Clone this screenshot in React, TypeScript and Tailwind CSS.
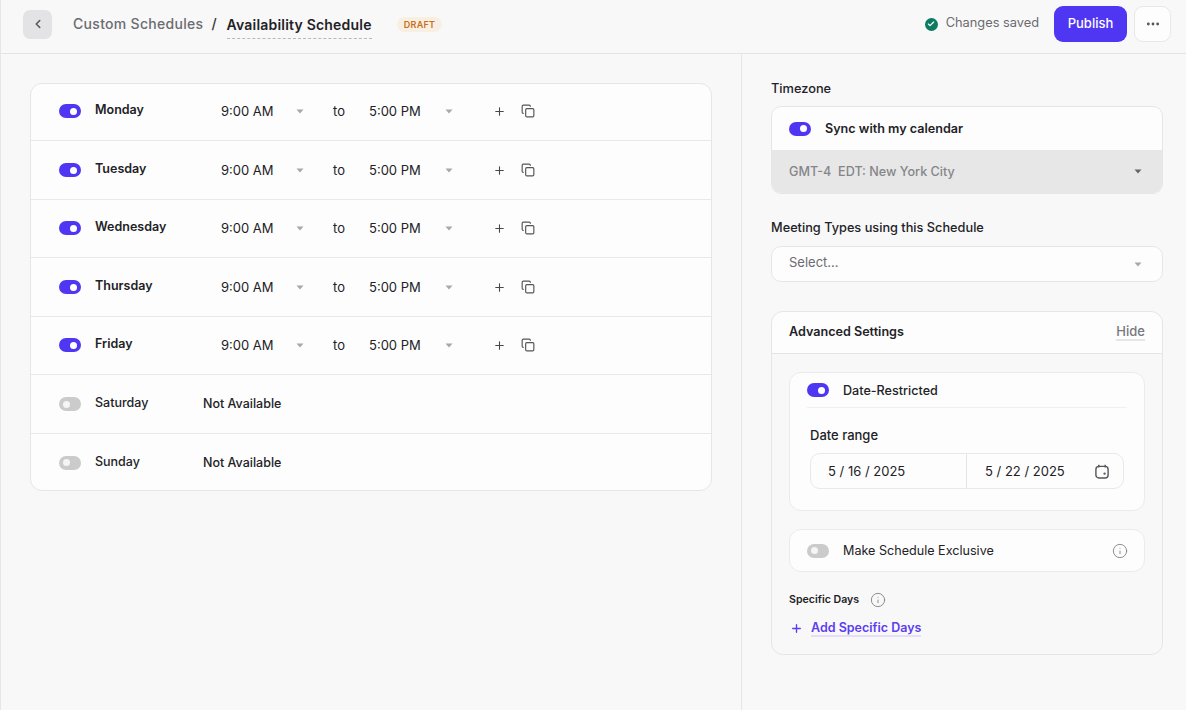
import React from "react";
import { ChevronLeft, Plus, Copy, Ellipsis, Info, Check } from "lucide-react";

function Toggle({ on }: { on: boolean }) {
  return on ? (
    <span className="flex h-[14px] w-[22px] shrink-0 items-center justify-end rounded-full bg-[#4f36f3] pr-[4px]">
      <span className="h-[7px] w-[7px] rounded-full bg-white" />
    </span>
  ) : (
    <span className="flex h-[14px] w-[22px] shrink-0 items-center rounded-full bg-[#cbcbcb] pl-[4px]">
      <span className="h-[7px] w-[7px] rounded-full bg-[#f5f5f5]" />
    </span>
  );
}

function Caret({ color = "#a8a8a8" }: { color?: string }) {
  return (
    <svg width="8" height="5" viewBox="0 0 8 5" className="shrink-0">
      <path d="M0.5 0.5h7L4 4.6z" fill={color} />
    </svg>
  );
}

function Row({ day, on, cls }: { day: string; on: boolean; cls: string }) {
  return (
    <div className={`flex items-center pl-[28px] ${cls}`}>
      <Toggle on={on} />
      <span className={`ml-[14px] w-[108px] -translate-y-[1px] text-[12.5px] leading-4 text-[#222226] ${on ? "font-semibold" : "font-medium"}`}>
        {day}
      </span>
      {on ? (
        <div className="flex items-center text-[13px] leading-4 text-[#222226]">
          <span className="ml-[18px] w-[75px]">9:00 AM</span>
          <Caret />
          <span className="ml-[29px] w-[36px]">to</span>
          <span className="w-[76px]">5:00 PM</span>
          <Caret />
          <Plus size={13} strokeWidth={2} className="ml-[40px] text-[#48484c]" />
          <Copy size={14} strokeWidth={2} className="ml-[15px] text-[#55555a]" />
        </div>
      ) : (
        <span className="text-[12.5px] font-medium leading-4 text-[#222226]">Not Available</span>
      )}
    </div>
  );
}

export default function App() {
  return (
    <div className="flex h-[710px] w-[1186px] flex-col overflow-hidden border-l border-[#e6e6e6] bg-[#f8f8f8] font-['Inter',sans-serif]">
      <header className="flex h-[54px] shrink-0 items-center border-b border-[#e4e4e4] pb-[5px] pl-[22px] pr-[15px]">
        <button className="flex h-[29px] w-[29px] items-center justify-center rounded-[7px] bg-[#e3e3e5]">
          <ChevronLeft size={14} strokeWidth={2.6} className="text-[#55555a]" />
        </button>
        <span className="ml-[21px] text-[14px] font-medium leading-5 tracking-[0.3px] text-[#6b6b70]">Custom Schedules</span>
        <span className="ml-[8px] text-[14px] font-medium leading-5 text-[#333338]">/</span>
        <span className="ml-[10px] border-b border-dashed border-[#b8b8b8] pb-[3px] pt-[6px] text-[14px] font-semibold leading-5 tracking-[0.2px] text-[#222226]">
          Availability Schedule
        </span>
        <span className="ml-[25px] rounded-full bg-[#f8efe3] px-[7px] py-[2px] text-[9px] font-semibold leading-[11px] tracking-[0.3px] text-[#c8701c]">
          DRAFT
        </span>
        <span className="ml-auto flex h-[13px] w-[13px] items-center justify-center rounded-full bg-[#0d7a62]">
          <Check size={8} strokeWidth={3.5} className="text-white" />
        </span>
        <span className="ml-[8px] -translate-y-[1px] text-[12.8px] leading-4 text-[#6b6b70]">Changes saved</span>
        <button className="ml-[15px] flex h-[36px] w-[73px] items-center justify-center rounded-[9px] bg-[#4f36f3] text-[13px] font-medium text-white">
          Publish
        </button>
        <button className="ml-[7px] flex h-[36px] w-[37px] items-center justify-center rounded-[9px] border border-[#e8e8e8] bg-[#fdfdfd]">
          <Ellipsis size={16} strokeWidth={2.2} className="text-[#55555a]" />
        </button>
      </header>
      <div className="flex min-h-0 flex-1">
        <main className="w-[741px] shrink-0 border-r border-[#e6e6e6] pl-[29px] pt-[29px]">
          <div className="flex h-[408px] w-[682px] flex-col rounded-[12px] border border-[#e6e6e6] bg-[#fdfdfd]">
            <Row day="Monday" on cls="h-[57px] border-b border-[#e8e8e8] pb-[2px]" />
            <Row day="Tuesday" on cls="h-[59px] border-b border-[#e8e8e8]" />
            <Row day="Wednesday" on cls="h-[58px] border-b border-[#e8e8e8] pb-[1px]" />
            <Row day="Thursday" on cls="h-[59px] border-b border-[#e8e8e8]" />
            <Row day="Friday" on cls="h-[58px] border-b border-[#e8e8e8] pb-[1px]" />
            <Row day="Saturday" on={false} cls="h-[59px] border-b border-[#e8e8e8]" />
            <Row day="Sunday" on={false} cls="h-[56px] pt-[1px]" />
          </div>
        </main>
        <aside className="flex-1 pl-[29px] pr-[23px] pt-[27px]">
          <h3 className="text-[12.8px] font-medium leading-4 text-[#222226]">Timezone</h3>
          <div className="mt-[9px] overflow-hidden rounded-[10px] border border-[#e6e6e6] bg-[#fdfdfd]">
            <div className="flex h-[43px] items-center pl-[17px]">
              <Toggle on />
              <span className="ml-[14px] translate-y-[1px] text-[12.6px] font-semibold text-[#222226]">Sync with my calendar</span>
            </div>
            <div className="flex h-[43px] items-center justify-between bg-[#e7e7e7] pl-[17px] pr-[20px] text-[12.6px] text-[#85858a]">
              <span className="translate-y-[1px] font-medium">GMT-4&nbsp; EDT: New York City</span>
              <Caret color="#66666a" />
            </div>
          </div>
          <h3 className="mt-[26px] text-[12.75px] font-medium leading-4 text-[#222226]">Meeting Types using this Schedule</h3>
          <div className="mt-[10px] flex h-[36px] items-center justify-between rounded-[10px] border border-[#e6e6e6] bg-[#fdfdfd] pl-[17px] pr-[20px]">
            <span className="-translate-y-[1px] text-[13px] text-[#6b6b70]">Select...</span>
            <Caret />
          </div>
          <section className="mt-[29px] h-[344px] rounded-[12px] border border-[#e6e6e6]">
            <div className="flex h-[42px] items-center justify-between rounded-t-[12px] border-b border-[#e4e4e4] bg-[#fdfdfd] pl-[17px] pr-[17px]">
              <span className="text-[12.6px] font-semibold text-[#222226]">Advanced Settings</span>
              <span className="border-b-2 border-[#e6e6e6] text-[13px] font-medium leading-[15px] text-[#77777c]">Hide</span>
            </div>
            <div className="px-[17px] pt-[18px]">
              <div className="h-[139px] rounded-[12px] border border-[#ebebeb] bg-[#fdfdfd] px-[17px]">
                <div className="flex h-[35px] items-center border-b border-[#f0f0f0]">
                  <Toggle on />
                  <span className="ml-[14px] translate-y-[1px] text-[12.6px] font-medium text-[#222226]">Date-Restricted</span>
                </div>
                <div className="mt-[19px] pl-[3px] text-[13px] font-medium leading-4 text-[#222226]">Date range</div>
                <div className="ml-[3px] mt-[10px] flex h-[36px] w-[314px] items-center rounded-[10px] border border-[#e8e8e8] text-[13px] text-[#222226]">
                  <span className="flex h-full w-[156px] items-center whitespace-pre border-r border-[#e4e4e4] pl-[17px]">
                    <span className="translate-y-[1px]">5 / 16 / 2025</span>
                  </span>
                  <span className="flex-1 translate-y-[1px] whitespace-pre pl-[18px]">5 / 22 / 2025</span>
                  <svg width="14" height="15" viewBox="0 0 14 15" fill="none" stroke="#55555a" strokeWidth="1.4" className="mr-[14px]">
                    <rect x="0.9" y="2.4" width="12.2" height="11.6" rx="3" />
                    <path d="M3.8 0.8v2.6M10.2 0.8v2.6" />
                    <circle cx="9.6" cy="9.6" r="0.5" />
                  </svg>
                </div>
              </div>
              <div className="mt-[18px] flex h-[43px] items-center rounded-[12px] border border-[#ebebeb] bg-[#fdfdfd] pl-[17px] pr-[16px]">
                <Toggle on={false} />
                <span className="ml-[14px] translate-y-[1px] text-[12.6px] text-[#222226]">Make Schedule Exclusive</span>
                <Info size={16} strokeWidth={1.4} className="ml-auto text-[#85858a]" />
              </div>
              <div className="mt-[20px] flex items-center">
                <span className="text-[10.6px] font-semibold leading-4 text-[#222226]">Specific Days</span>
                <Info size={16} strokeWidth={1.4} className="ml-[11px] text-[#85858a]" />
              </div>
              <div className="mt-[12px] flex items-center">
                <Plus size={13} strokeWidth={2.5} className="ml-[1px] text-[#5c3df0]" />
                <span className="ml-[8px] border-b-2 border-[#e4def9] text-[12.5px] font-semibold leading-[15px] text-[#5c3df0]">Add Specific Days</span>
              </div>
            </div>
          </section>
        </aside>
      </div>
    </div>
  );
}
